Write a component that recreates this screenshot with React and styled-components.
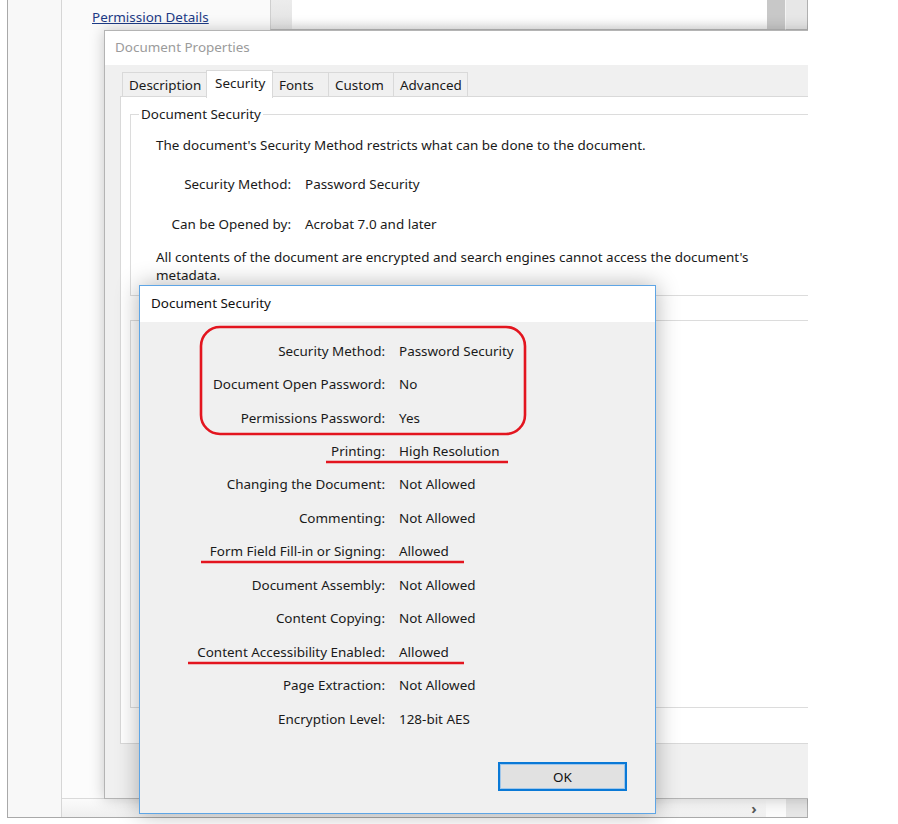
import React from 'react';
import styled, { createGlobalStyle } from 'styled-components';

const Global = createGlobalStyle`
  html, body { margin: 0; padding: 0; background: #ffffff; }
  body { font-family: "Noto Sans", "Open Sans", sans-serif; }
  * { box-sizing: border-box; }
`;

const FONT = '"Noto Sans", "Open Sans", sans-serif';
const SIZE = '13.45px';

const Desktop = styled.div`
  position: relative;
  width: 898px;
  height: 824px;
  overflow: hidden;
  background: #ffffff;
  font-family: ${FONT};
  font-size: ${SIZE};
  color: #1a1a1a;
`;

const Shot = styled.div`
  position: relative;
  width: 808px;
  height: 824px;
  overflow: hidden;
`;

const AppFrame = styled.div`
  margin-left: 7px;
  width: 801px;
  height: 818px;
  border-left: 1px solid #a9a9a9;
  border-bottom: 1px solid #a9a9a9;
  display: grid;
  grid-template-columns: 54px 1fr;
`;

const Rail = styled.div`
  background: #f8f8f8;
  border-right: 1px solid #d6d6d6;
`;

const MainCol = styled.div`
  display: flex;
  flex-direction: column;
  background: #fcfcfc;
`;

const TopPanel = styled.div`
  display: flex;
  height: 30px;
`;

const NavCell = styled.div`
  width: 208px;
  background: #fafafa;
  padding: 8px 0 0 30px;
`;

const NavLink = styled.a`
  color: #1d3b86;
  text-decoration: underline;
  line-height: 18px;
  cursor: pointer;
`;

const PanelCell = styled.div`
  width: ${p => (p.$w ? p.$w + 'px' : 'auto')};
  flex: ${p => (p.$w ? 'none' : '1')};
  background: ${p => p.$bg};
  border-bottom: 1px solid #b8b8b8;
  border-left: ${p => (p.$edge ? '1px solid ' + p.$edge : 'none')};
  border-right: ${p => (p.$rightEdge ? '1px solid ' + p.$rightEdge : 'none')};
`;

const Content = styled.div`
  flex: 1;
  background: #fcfcfc;
`;

const BottomBar = styled.div`
  height: 19px;
  display: flex;
  justify-content: flex-end;
  align-items: stretch;
  background: linear-gradient(#fbfbfb, #efefef);
  border-top: 1px solid #dadada;
`;

const ScrollArrow = styled.span`
  width: 24px;
  display: flex;
  align-items: center;
  justify-content: center;
  font-size: 15px;
  font-weight: bold;
  color: #5a5a5a;
`;

const ScrollBox = styled.span`
  width: ${p => p.$w}px;
  background: ${p => p.$bg};
  border-right: ${p => (p.$end ? '1px solid #b0b0b0' : 'none')};
`;

/* Document Properties window */
const PropsWindow = styled.div`
  position: absolute;
  left: 104px;
  top: 30px;
  width: 760px;
  height: 769px;
  border: 1px solid #b4b4b4;
  background: #f0f0f0;
  box-shadow: 0 0 14px rgba(0, 0, 0, 0.22);
  display: flex;
  flex-direction: column;
`;

const PropsTitle = styled.div`
  height: 34px;
  background: #ffffff;
  color: #9b9b9b;
  padding: 7px 0 0 10px;
  line-height: 18px;
`;

const PropsBody = styled.div`
  padding: 5px 0 0 15px;
`;

const TabRow = styled.div`
  display: flex;
  align-items: flex-end;
  height: 27px;
  padding-left: 2px;
  position: relative;
  z-index: 1;
`;

const Tab = styled.div`
  width: ${p => p.$w}px;
  height: ${p => (p.$active ? 28 : 25)}px;
  padding: ${p => (p.$active ? '3px 0 0 8px' : '3px 0 0 6px')};
  line-height: 18px;
  background: ${p => (p.$active ? '#ffffff' : '#f0f0f0')};
  border: 1px solid #d9d9d9;
  border-bottom: ${p => (p.$active ? 'none' : '1px solid #d9d9d9')};
  margin-left: ${p => (p.$first ? 0 : -1)}px;
  margin-bottom: ${p => (p.$active ? -1 : 0)}px;
  position: relative;
  z-index: ${p => (p.$active ? 2 : 1)};
`;

const TabPanel = styled.div`
  height: 648px;
  margin-top: -1px;
  background: #ffffff;
  border: 1px solid #d9d9d9;
  padding: 8px 0 0 9px;
`;

const Group = styled.fieldset`
  margin: 0;
  padding: 12px 0 11px 8px;
  border: 1px solid #dcdcdc;
  min-width: 0;
`;

const Legend = styled.legend`
  padding: 0 2px;
  line-height: 19px;
`;

const GroupContent = styled.div`
  padding-left: 17px;
`;

const Para = styled.p`
  margin: 0;
  line-height: 18px;
  max-width: 620px;
`;

const InfoGrid = styled.div`
  display: grid;
  grid-template-columns: 135px auto;
  column-gap: 14px;
  grid-auto-rows: 18px;
  row-gap: 22px;
  margin: 21px 0 15px;
`;

const InfoLabel = styled.span`
  text-align: right;
  line-height: 18px;
  white-space: nowrap;
`;

const InfoValue = styled.span`
  line-height: 18px;
  white-space: nowrap;
`;

const EmptyGroup = styled.div`
  margin-top: 24px;
  height: 388px;
  border: 1px solid #dcdcdc;
`;

/* Document Security dialog */
const Dialog = styled.div`
  position: absolute;
  left: 139px;
  top: 285px;
  width: 517px;
  height: 529px;
  border: 1px solid #5ea5e5;
  background: #f0f0f0;
  box-shadow: 0 0 22px rgba(0, 0, 0, 0.3);
  display: flex;
  flex-direction: column;
`;

const DialogTitle = styled.div`
  height: 36px;
  background: #ffffff;
  color: #111;
  padding: 8px 0 0 11px;
  line-height: 18px;
`;

const DialogBody = styled.div`
  flex: 1;
  display: flex;
  flex-direction: column;
  padding: 12px 28px 22px 0;
  position: relative;
`;

const SecGrid = styled.div`
  display: grid;
  grid-template-columns: 245px auto;
  column-gap: 14px;
  grid-auto-rows: 33.45px;
  align-items: center;
`;

const SecLabel = styled.span`
  text-align: right;
  white-space: nowrap;
  line-height: 18px;
`;

const SecValue = styled.span`
  white-space: nowrap;
  line-height: 18px;
`;

const ButtonRow = styled.div`
  margin-top: auto;
  display: flex;
  justify-content: flex-end;
`;

const OkButton = styled.button`
  width: 129px;
  height: 29px;
  background: #e1e1e1;
  border: 2px solid #0a79d6;
  box-shadow: inset 0 0 0 1px #9fc6ea;
  font-family: ${FONT};
  font-size: ${SIZE};
  color: #111;
  padding: 0;
`;

const Annotations = styled.svg`
  position: absolute;
  left: 0;
  top: 0;
  width: 100%;
  height: 100%;
  pointer-events: none;
  overflow: visible;
`;

const tabs = [
  { label: 'Description', w: 85 },
  { label: 'Security', w: 67, active: true },
  { label: 'Fonts', w: 57 },
  { label: 'Custom', w: 66 },
  { label: 'Advanced', w: 75 },
];

const secRows = [
  ['Security Method:', 'Password Security'],
  ['Document Open Password:', 'No'],
  ['Permissions Password:', 'Yes'],
  ['Printing:', 'High Resolution'],
  ['Changing the Document:', 'Not Allowed'],
  ['Commenting:', 'Not Allowed'],
  ['Form Field Fill-in or Signing:', 'Allowed'],
  ['Document Assembly:', 'Not Allowed'],
  ['Content Copying:', 'Not Allowed'],
  ['Content Accessibility Enabled:', 'Allowed'],
  ['Page Extraction:', 'Not Allowed'],
  ['Encryption Level:', '128-bit AES'],
];

const RED = '#e3151f';

export default function App() {
  return (
    <Desktop>
      <Global />
      <Shot>
        <AppFrame>
          <Rail />
          <MainCol>
            <TopPanel>
              <NavCell>
                <NavLink>Permission Details</NavLink>
              </NavCell>
              <PanelCell $w={22} $bg="linear-gradient(#ececec, #e2e2e2)" $edge="#cfcfcf" />
              <PanelCell $bg="linear-gradient(#ffffff 65%, #efefef)" />
              <PanelCell $w={18} $bg="#c8c8c8" />
              <PanelCell $w={23} $bg="#e7e7e7" $edge="#f4f4f4" $rightEdge="#b0b0b0" />
            </TopPanel>
            <Content />
            <BottomBar>
              <ScrollArrow>›</ScrollArrow>
              <ScrollBox $w={20} $bg="#fbfbfb" />
              <ScrollBox $w={22} $bg="#e6e6e6" $end />
            </BottomBar>
          </MainCol>
        </AppFrame>

        <PropsWindow>
          <PropsTitle>Document Properties</PropsTitle>
          <PropsBody>
            <TabRow>
              {tabs.map((t, i) => (
                <Tab key={t.label} $w={t.w} $active={t.active} $first={i === 0}>
                  {t.label}
                </Tab>
              ))}
            </TabRow>
            <TabPanel>
              <Group>
                <Legend>Document Security</Legend>
                <GroupContent>
                  <Para>The document's Security Method restricts what can be done to the document.</Para>
                  <InfoGrid>
                    <InfoLabel>Security Method:</InfoLabel>
                    <InfoValue>Password Security</InfoValue>
                    <InfoLabel>Can be Opened by:</InfoLabel>
                    <InfoValue>Acrobat 7.0 and later</InfoValue>
                  </InfoGrid>
                  <Para>
                    All contents of the document are encrypted and search engines cannot access the document's metadata.
                  </Para>
                </GroupContent>
              </Group>
              <EmptyGroup />
            </TabPanel>
          </PropsBody>
        </PropsWindow>

        <Dialog>
          <DialogTitle>Document Security</DialogTitle>
          <DialogBody>
            <SecGrid>
              {secRows.map(([l, v]) => (
                <React.Fragment key={l}>
                  <SecLabel>{l}</SecLabel>
                  <SecValue>{v}</SecValue>
                </React.Fragment>
              ))}
            </SecGrid>
            <ButtonRow>
              <OkButton>OK</OkButton>
            </ButtonRow>
            <Annotations viewBox="0 0 515 491" preserveAspectRatio="none">
              <rect x="61" y="5" width="324" height="107" rx="19" ry="19" fill="none" stroke={RED} strokeWidth="2.6" />
              <line x1="186" y1="140" x2="368" y2="140" stroke={RED} strokeWidth="2.6" />
              <line x1="61" y1="240" x2="324" y2="240" stroke={RED} strokeWidth="2.6" />
              <line x1="48" y1="341" x2="324" y2="341" stroke={RED} strokeWidth="2.6" />
            </Annotations>
          </DialogBody>
        </Dialog>
      </Shot>
    </Desktop>
  );
}
